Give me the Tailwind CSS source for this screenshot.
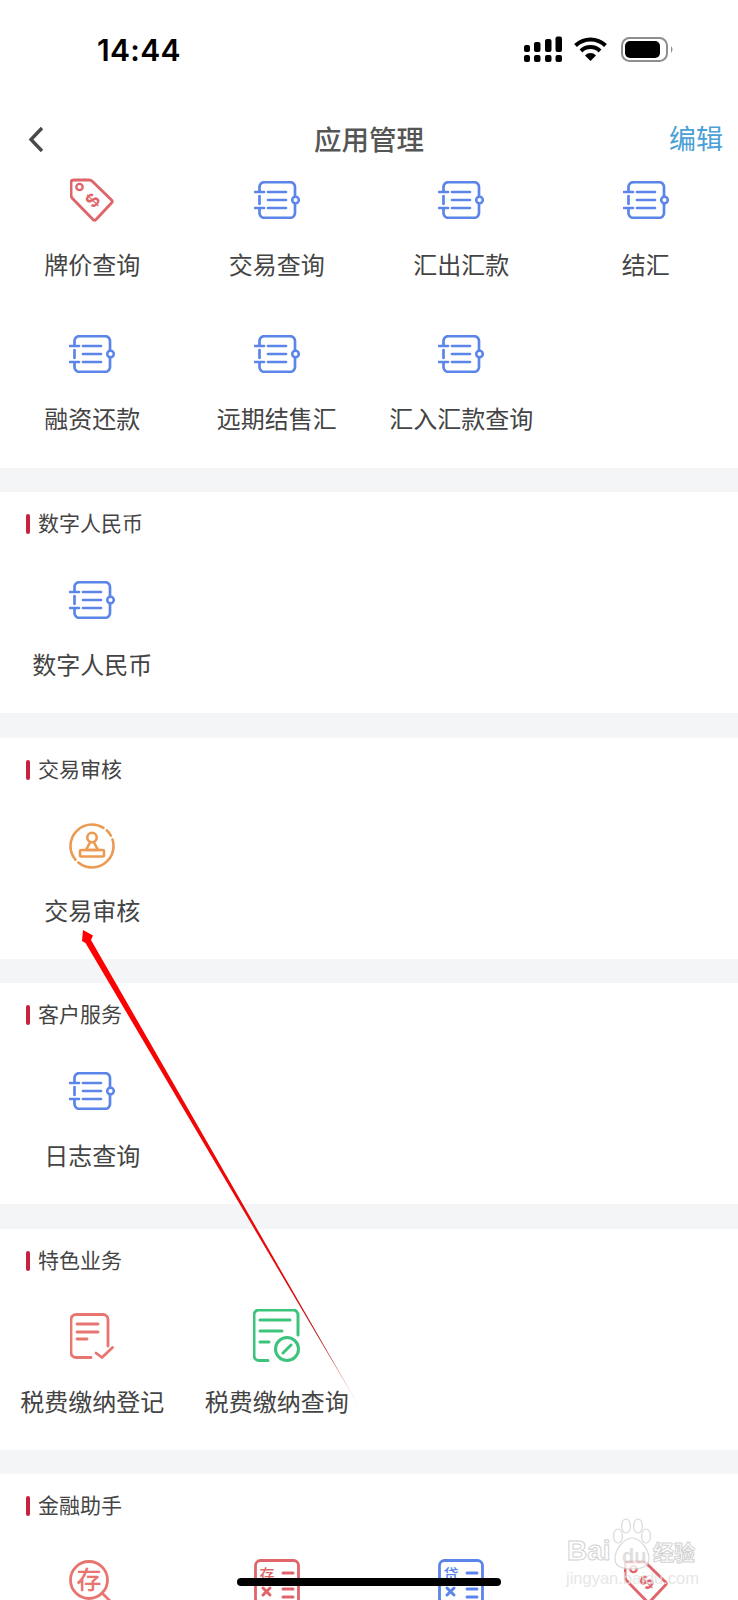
<!DOCTYPE html>
<html lang="en">
<head>
  <meta charset="UTF-8" />
  <meta name="viewport" content="width=device-width, initial-scale=1.0" />
  <title>应用管理</title>
  <script src="https://cdn.jsdelivr.net/npm/@tailwindcss/browser@4"></script>
</head>
<body class="bg-white font-['Noto_Sans_CJK_SC',sans-serif]">
  <!-- Shared icons -->
  <svg class="hidden">
    <symbol id="book" viewBox="0 0 46 38">
      <path d="M5.500 11V6.500a5 5 0 0 1 5-5.400h25.500a5 5 0 0 1 5 5.400v25a5 5 0 0 1-5 5.400h-25.500a5 5 0 0 1-5-5.400V27M5.500 15v8M1 11h9M1 27h9M14 11h18M14 19h18M14 27h18" fill="none" stroke="currentColor" stroke-width="2.700" stroke-linecap="round"/>
      <circle cx="41.500" cy="19" r="3.300" fill="#fff" stroke="currentColor" stroke-width="2.500"/>
    </symbol>
    <symbol id="tag" viewBox="0 0 44 44">
      <path d="M4 2h15q2 0 3.500 1.500l19 18.500q1.500 1.500 0 3l-15.500 16.500q-1.500 1.500-3 0l-20.500-21q-1.500-1.500-1.500-3.500v-13q0-2 3-2z" fill="none" stroke="currentColor" stroke-width="2.900" stroke-linejoin="round"/>
      <circle cx="9.500" cy="9" r="3.200" fill="none" stroke="currentColor" stroke-width="2.300"/>
      <text x="22.500" y="29" text-anchor="middle" transform="rotate(-45 22.500 22)" font-family="Liberation Sans" font-weight="700" font-size="20" fill="currentColor">$</text>
    </symbol>
  </svg>

  <div class="relative w-[738px] h-[1600px] overflow-hidden bg-white">
    <!-- Status bar -->
    <div class="h-[110px] relative">
      <span class="absolute left-[97px] top-[31px] text-[30px] leading-[38px] font-semibold tracking-[0.3px] text-black font-['Inter',sans-serif]">14:44</span>
      <svg class="absolute left-[520px] top-[32px]" width="160" height="34" viewBox="520 32 160 34">
        <g fill="#000">
          <rect x="524" y="45" width="6" height="7" rx="2"/><rect x="534" y="42" width="6.500" height="10" rx="2"/><rect x="545" y="39" width="6.500" height="13" rx="2"/><rect x="555.500" y="36.500" width="6.500" height="15.500" rx="2"/>
          <rect x="524" y="55" width="6" height="7" rx="2"/><rect x="534" y="55" width="6.500" height="7" rx="2"/><rect x="545" y="55" width="6.500" height="7" rx="2"/><rect x="555.500" y="55" width="6.500" height="7" rx="2"/>
          <path d="M590.500 61l-5.500-5.500a7.500 7.500 0 0 1 11 0z"/>
        </g>
        <path d="M575.500 45.500a21.500 21.500 0 0 1 30 0M581 51a13.500 13.500 0 0 1 19 0" fill="none" stroke="#000" stroke-width="4"/>
        <rect x="622" y="38" width="45" height="23" rx="7.500" fill="none" stroke="#8e8e8e" stroke-width="2"/>
        <rect x="625" y="41" width="35" height="17" rx="5" fill="#000"/>
        <path d="M671 46q3 3.500 0 7z" fill="#8e8e8e"/>
      </svg>
    </div>

    <!-- Nav -->
    <div class="relative h-[58px] flex items-center justify-center">
      <svg class="absolute left-[27px] top-[16px]" width="18" height="27" viewBox="0 0 18 27"><path d="M15 2L4 13.500 15 25" fill="none" stroke="#4a4a4a" stroke-width="3.400"/></svg>
      <h1 class="mb-[2px] text-[27.500px] leading-[36px] font-medium text-[#555]">应用管理</h1>
      <a class="absolute right-[15px] top-[10px] text-[27px] leading-[36px] text-[#4a9fd6]">编辑</a>
    </div>

    <div class="bg-[#f4f5f7]">
      <!-- Top apps -->
      <section class="bg-white pt-[4px] pb-[32px] grid grid-cols-4 gap-y-[44px]">
        <div class="flex flex-col items-center">
          <div class="h-[56px] flex items-center justify-center"><svg class="text-[#e0656b]" width="44" height="44"><use href="#tag"/></svg></div>
          <p class="mt-[19px] mb-[1px] text-[24px] leading-[34px] text-[#444]">牌价查询</p>
        </div>
        <div class="flex flex-col items-center">
          <div class="h-[56px] flex items-center justify-center"><svg class="text-[#5b85e8]" width="46" height="38"><use href="#book"/></svg></div>
          <p class="mt-[19px] mb-[1px] text-[24px] leading-[34px] text-[#444]">交易查询</p>
        </div>
        <div class="flex flex-col items-center">
          <div class="h-[56px] flex items-center justify-center"><svg class="text-[#5b85e8]" width="46" height="38"><use href="#book"/></svg></div>
          <p class="mt-[19px] mb-[1px] text-[24px] leading-[34px] text-[#444]">汇出汇款</p>
        </div>
        <div class="flex flex-col items-center">
          <div class="h-[56px] flex items-center justify-center"><svg class="text-[#5b85e8]" width="46" height="38"><use href="#book"/></svg></div>
          <p class="mt-[19px] mb-[1px] text-[24px] leading-[34px] text-[#444]">结汇</p>
        </div>
        <div class="flex flex-col items-center">
          <div class="h-[56px] flex items-center justify-center"><svg class="text-[#5b85e8]" width="46" height="38"><use href="#book"/></svg></div>
          <p class="mt-[19px] mb-[1px] text-[24px] leading-[34px] text-[#444]">融资还款</p>
        </div>
        <div class="flex flex-col items-center">
          <div class="h-[56px] flex items-center justify-center"><svg class="text-[#5b85e8]" width="46" height="38"><use href="#book"/></svg></div>
          <p class="mt-[19px] mb-[1px] text-[24px] leading-[34px] text-[#444]">远期结售汇</p>
        </div>
        <div class="flex flex-col items-center">
          <div class="h-[56px] flex items-center justify-center"><svg class="text-[#5b85e8]" width="46" height="38"><use href="#book"/></svg></div>
          <p class="mt-[19px] mb-[1px] text-[24px] leading-[34px] text-[#444]">汇入汇款查询</p>
        </div>
      </section>

      <!-- 数字人民币 -->
      <section class="bg-white h-[221px] mt-[24px]">
        <h2 class="h-[64px] pb-[1px] flex items-center pl-[26px] gap-[8px] text-[21px] text-[#444]"><i class="w-[4px] h-[20px] rounded-full bg-[#c8213f]"></i><span class="pb-[2px]">数字人民币</span></h2>
        <div class="mt-[16px] grid grid-cols-4">
          <div class="flex flex-col items-center">
            <div class="h-[56px] flex items-center justify-center"><svg class="text-[#5b85e8]" width="46" height="38"><use href="#book"/></svg></div>
            <p class="mt-[19px] text-[24px] leading-[34px] text-[#444]">数字人民币</p>
          </div>
        </div>
      </section>

      <!-- 交易审核 -->
      <section class="bg-white h-[221px] mt-[25px]">
        <h2 class="h-[64px] pb-[1px] flex items-center pl-[26px] gap-[8px] text-[21px] text-[#444]"><i class="w-[4px] h-[20px] rounded-full bg-[#c8213f]"></i><span class="pb-[2px]">交易审核</span></h2>
        <div class="mt-[16px] grid grid-cols-4">
          <div class="flex flex-col items-center">
            <div class="h-[56px] flex items-center justify-center">
              <svg class="text-[#ec9a52]" width="46" height="46" viewBox="0 0 46 46" fill="none" stroke="currentColor" stroke-width="2.600" stroke-linecap="round">
                <circle cx="23" cy="23" r="21.500" pathLength="100" stroke-dasharray="36 3 45 3 5 3 5"/>
                <circle cx="23" cy="14.500" r="4.700"/>
                <path d="M21 19.500L17 27h12l-4-7.500"/>
                <rect x="11" y="27" width="24" height="6.500" rx="1"/>
              </svg>
            </div>
            <p class="mt-[19px] text-[24px] leading-[34px] text-[#444]">交易审核</p>
          </div>
        </div>
      </section>

      <!-- 客户服务 -->
      <section class="bg-white h-[221px] mt-[24px]">
        <h2 class="h-[64px] pb-[1px] flex items-center pl-[26px] gap-[8px] text-[21px] text-[#444]"><i class="w-[4px] h-[20px] rounded-full bg-[#c8213f]"></i><span class="pb-[2px]">客户服务</span></h2>
        <div class="mt-[16px] grid grid-cols-4">
          <div class="flex flex-col items-center">
            <div class="h-[56px] flex items-center justify-center"><svg class="text-[#5b85e8]" width="46" height="38"><use href="#book"/></svg></div>
            <p class="mt-[19px] text-[24px] leading-[34px] text-[#444]">日志查询</p>
          </div>
        </div>
      </section>

      <!-- 特色业务 -->
      <section class="bg-white h-[221px] mt-[25px]">
        <h2 class="h-[64px] pb-[1px] flex items-center pl-[26px] gap-[8px] text-[21px] text-[#444]"><i class="w-[4px] h-[20px] rounded-full bg-[#c8213f]"></i><span class="pb-[2px]">特色业务</span></h2>
        <div class="mt-[16px] grid grid-cols-4">
          <div class="flex flex-col items-center">
            <div class="h-[56px] flex items-center justify-center">
              <svg class="text-[#e8756f] mb-[2px]" width="44" height="46" viewBox="0 0 44 46" fill="none" stroke="currentColor" stroke-width="2.800" stroke-linecap="round" stroke-linejoin="round">
                <path d="M21 44.500H6a5 5 0 0 1-5-5V6.500a5 5 0 0 1 5-5h27a5 5 0 0 1 5 5V33M7 11h21M7 19h21M7 26h10M26 40l6 4.500 10.500-10"/>
              </svg>
            </div>
            <p class="mt-[19px] text-[24px] leading-[34px] text-[#444] whitespace-nowrap">税费缴纳登记</p>
          </div>
          <div class="flex flex-col items-center">
            <div class="h-[56px] flex items-center justify-center">
              <svg class="text-[#3cc47c] mb-[4px]" width="47" height="53" viewBox="0 0 47 53" fill="none" stroke="currentColor" stroke-width="3" stroke-linecap="round" stroke-linejoin="round">
                <path d="M15 51.500H6a5 5 0 0 1-5-5V6a5 5 0 0 1 5-5h34a5 5 0 0 1 5 5v20M7 11h30M7 22h22M7 33h9M30 44l8-8"/>
                <circle cx="34" cy="40" r="11.500"/>
              </svg>
            </div>
            <p class="mt-[19px] text-[24px] leading-[34px] text-[#444] whitespace-nowrap">税费缴纳查询</p>
          </div>
        </div>
      </section>

      <!-- 金融助手 -->
      <section class="bg-white h-[221px] mt-[24px]">
        <h2 class="h-[64px] pb-[1px] flex items-center pl-[26px] gap-[8px] text-[21px] text-[#444]"><i class="w-[4px] h-[20px] rounded-full bg-[#c8213f]"></i><span class="pb-[2px]">金融助手</span></h2>
        <div class="mt-[16px] grid grid-cols-4">
          <div class="flex flex-col items-center">
            <div class="h-[56px] flex items-center justify-center">
              <svg class="text-[#e8756f]" width="46" height="46" viewBox="0 0 46 46" fill="none" stroke="currentColor" stroke-width="2.800" stroke-linecap="round">
                <circle cx="20" cy="21" r="18.500"/><path d="M33 34l11 11"/>
                <text x="20" y="30" text-anchor="middle" font-size="25" font-weight="500" fill="currentColor" stroke="none" font-family="Noto Sans CJK SC">存</text>
              </svg>
            </div>
          </div>
          <div class="flex flex-col items-center">
            <div class="h-[56px] flex items-center justify-center">
              <svg class="text-[#e0656b]" width="46" height="46" viewBox="0 0 46 46" fill="none" stroke="currentColor" stroke-width="2.800" stroke-linecap="round">
                <rect x="1.500" y="1.500" width="43" height="43" rx="5"/>
                <text x="13" y="21" text-anchor="middle" font-size="15" font-weight="500" fill="currentColor" stroke="none" font-family="Noto Sans CJK SC">存</text>
                <path d="M29 14h10M29 30h10M29 38h10M9 29l7 7M16 29l-7 7" stroke-width="3"/>
              </svg>
            </div>
          </div>
          <div class="flex flex-col items-center">
            <div class="h-[56px] flex items-center justify-center">
              <svg class="text-[#5b85e8]" width="46" height="46" viewBox="0 0 46 46" fill="none" stroke="currentColor" stroke-width="2.800" stroke-linecap="round">
                <rect x="1.500" y="1.500" width="43" height="43" rx="5"/>
                <text x="13" y="21" text-anchor="middle" font-size="15" font-weight="500" fill="currentColor" stroke="none" font-family="Noto Sans CJK SC">贷</text>
                <path d="M29 14h10M29 30h10M29 38h10M9 29l7 7M16 29l-7 7" stroke-width="3"/>
              </svg>
            </div>
          </div>
          <div class="flex flex-col items-center">
            <div class="h-[56px] flex items-center justify-center"><svg class="text-[#e0656b]" width="44" height="44"><use href="#tag"/></svg></div>
          </div>
        </div>
      </section>
    </div>

    <!-- Red annotation arrow -->
    <svg class="absolute left-0 top-0 pointer-events-none" width="738" height="1600" viewBox="0 0 738 1600">
      <defs>
        <linearGradient id="fade" gradientUnits="userSpaceOnUse" x1="83" y1="931" x2="360" y2="1408">
          <stop offset="0" stop-color="#ff0000"/><stop offset="0.700" stop-color="#e60b0b"/><stop offset="0.850" stop-color="#b81c1c"/><stop offset="1" stop-color="#eec0c0"/>
        </linearGradient>
      </defs>
      <path d="M83 930L93 935.500 91 940 360 1408 85.500 943 82 941z" fill="url(#fade)"/>
    </svg>

    <!-- Baidu watermark -->
    <div class="absolute left-[566px] top-[1518px] w-[132px] h-[66px] pointer-events-none opacity-80">
      <svg class="absolute left-[46px] top-0" width="40" height="52" viewBox="0 0 40 52" fill="#fff" stroke="#d2d2d2" stroke-width="1.200">
        <ellipse cx="6" cy="18" rx="4.500" ry="7"/><ellipse cx="14" cy="8" rx="4.500" ry="7"/><ellipse cx="26" cy="8" rx="4.500" ry="7"/><ellipse cx="34" cy="18" rx="4.500" ry="7"/>
        <path d="M20 20c-8 0-17 11-17 21 0 8 9 10 17 10s17-2 17-10c0-10-9-21-17-21z"/>
      </svg>
      <p class="absolute left-[1px] top-[16px] text-[28px] leading-[34px] font-bold text-white font-['Liberation_Sans',sans-serif] [-webkit-text-stroke:1px_#c8c8c8]">Bai</p>
      <p class="absolute left-[56px] top-[26px] text-[20px] leading-[24px] font-bold text-[#d8d8d8] font-['Liberation_Sans',sans-serif]">du</p>
      <p class="absolute left-[87px] top-[19px] text-[21px] leading-[28px] font-bold whitespace-nowrap text-white font-['Noto_Sans_CJK_SC',sans-serif] [-webkit-text-stroke:1px_#c8c8c8]">经验</p>
      <p class="absolute left-0 top-[50px] text-[16.500px] leading-[20px] whitespace-nowrap text-[#e2e2e2] font-['Liberation_Sans',sans-serif]">jingyan.baidu.com</p>
    </div>

    <!-- Home indicator -->
    <div class="absolute left-[237px] top-[1578px] w-[264px] h-[8px] rounded-full bg-black"></div>
  </div>
</body>
</html>
